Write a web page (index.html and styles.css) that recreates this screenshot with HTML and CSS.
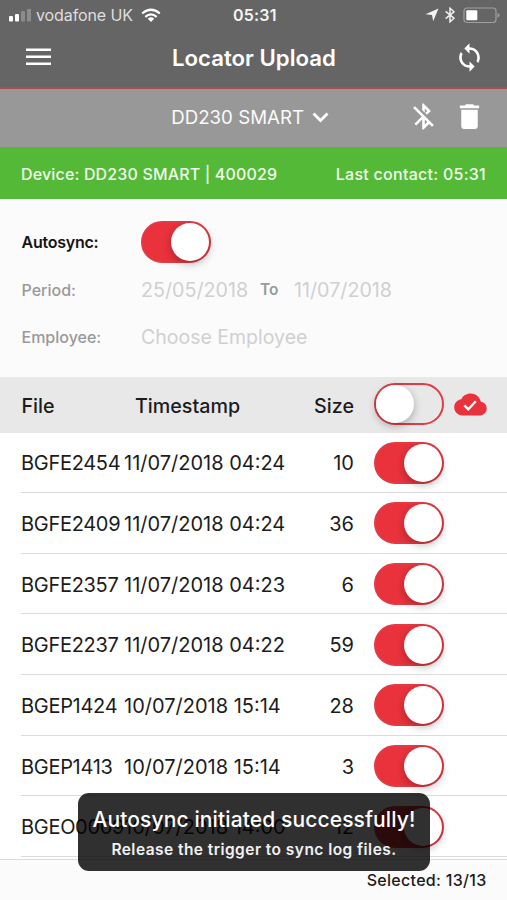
FILE: index.html
```html
<!DOCTYPE html>
<html lang="en">
<head>
<meta charset="utf-8">
<title>Locator Upload</title>
<link rel="stylesheet" href="styles.css">
</head>
<body>
<div class="screen">
  <div class="status">
    <div class="carrier">
      <svg width="24" height="14" viewBox="0 0 24 14"><g fill="#fff"><rect x="1" y="8" width="4" height="5.500" rx="1"/><rect x="7" y="6" width="4" height="7.500" rx="1"/><g opacity=".25"><rect x="13" y="3" width="4" height="10.500" rx="1"/><rect x="19" y="1" width="4" height="12.500" rx="1"/></g></g></svg>
      <span class="network">vodafone UK</span>
      <svg width="20" height="15" viewBox="0 0 20 15"><g fill="none" stroke="#fff" stroke-width="2.200"><path d="M1.200 5.500Q10-2 18.800 5.500"/><path d="M4.300 8.800Q10 4 15.700 8.800"/></g><path d="M6.800 10.700Q10 8 13.200 10.700L10 14Z" fill="#fff"/></svg>
    </div>
    <span class="clock">05:31</span>
    <div class="indicators">
      <svg width="14" height="14" viewBox="0 0 14 14"><path d="M13.500.5 8.200 13.200 7 7 .5 6.200Z" fill="#f4f4f4"/></svg>
      <svg width="10" height="16" viewBox="0 0 10 16"><path d="M.6 4.300 9 11.200 5 14.800V1.200L9 4.800.6 11.700" fill="none" stroke="#f0f0f0" stroke-width="1.500"/></svg>
      <svg width="37" height="17" viewBox="0 0 37 17"><rect x="1" y="1" width="32" height="14.500" rx="3" fill="none" stroke="#a0a0a0" stroke-width="1.200"/><path d="M34.500 6v4.500Q36.500 10 36.500 8.200T34.500 6Z" fill="#a0a0a0"/><rect x="3.300" y="3.300" width="11" height="10" rx="1" fill="#fff"/></svg>
    </div>
  </div>
  <header class="header">
    <svg class="menu" width="25" height="18" viewBox="0 0 25 18"><path d="M0 1.700h25M0 8.800h25M0 15.800h25" stroke="#fff" stroke-width="2.400"/></svg>
    <h1 class="title">Locator Upload</h1>
    <svg class="sync" width="31" height="31" viewBox="0 0 24 24"><path fill="#fff" d="M12 4V1L8 5l4 4V6c3.310 0 6 2.690 6 6 0 1.010-.25 1.970-.7 2.800l1.460 1.460C19.540 15.030 20 13.570 20 12c0-4.420-3.580-8-8-8zm0 14c-3.310 0-6-2.690-6-6 0-1.010.25-1.970.7-2.800L5.240 7.740C4.460 8.970 4 10.430 4 12c0 4.420 3.580 8 8 8v3l4-4-4-4v3z"/></svg>
  </header>
  <div class="device-bar">
    <div class="device-select"><span class="device-name">DD230 SMART</span>
      <svg width="17" height="11" viewBox="0 0 17 11"><path d="M1.500 1.500 8.500 8.500 15.500 1.500" fill="none" stroke="#fff" stroke-width="2.800"/></svg></div>
    <svg class="bt-off" width="31" height="31" viewBox="0 0 24 24"><path fill="#fff" d="M13 5.830l1.880 1.880-1.600 1.600 1.410 1.410 3.020-3.020L12 2h-1v5.030l2 2v-3.200zM5.410 4L4 5.410 10.590 12 5 17.590 6.410 19 11 14.410V22h1l4.290-4.290 2.300 2.290L20 18.590 5.410 4zM13 18.170v-3.760l1.880 1.880L13 18.170z"/></svg>
    <svg class="trash" width="33" height="33" viewBox="0 0 24 24"><path fill="#fff" d="M6 19c0 1.100.9 2 2 2h8c1.100 0 2-.9 2-2V7H6v12zM19 4h-3.500l-1-1h-5l-1 1H5v2h14V4z"/></svg>
  </div>
  <div class="contact-bar"><span class="device-info">Device: DD230 SMART | 400029</span><span class="contact">Last contact: 05:31</span></div>
  <section class="form">
    <div class="field"><label class="label active">Autosync:</label><span class="switch on"><i class="knob"></i></span></div>
    <div class="field period"><label class="label">Period:</label><span class="value date-from">25/05/2018</span><span class="to">To</span><span class="value date-to">11/07/2018</span></div>
    <div class="field"><label class="label employee">Employee:</label><span class="value choose">Choose Employee</span></div>
  </section>
  <div class="table-head">
    <span class="col-file">File</span><span class="col-stamp">Timestamp</span><span class="col-size">Size</span><span class="switch"><i class="knob"></i></span>
    <svg class="cloud" width="33" height="23" viewBox="0 0 33 23"><path fill="#e9323c" d="M26.800 8.800C25.800 3.800 21.500.5 16.500.5c-4 0-7.500 2.200-9.200 5.700C3.200 6.800.2 10.200.2 14.200c0 4.500 3.600 8.200 8.200 8.200h17.500c3.800 0 6.800-3.100 6.800-6.900 0-3.500-2.600-6.400-5.900-6.700Z"/><path d="m10.300 12.300 4 4 7.500-8" fill="none" stroke="#fff" stroke-width="2.400"/></svg>
  </div>
  <div class="rows">
    <div class="row"><span class="file">BGFE2454</span><span class="stamp">11/07/2018 04:24</span><span class="size">10</span><span class="switch on"><i class="knob"></i></span></div>
    <div class="row"><span class="file">BGFE2409</span><span class="stamp">11/07/2018 04:24</span><span class="size">36</span><span class="switch on"><i class="knob"></i></span></div>
    <div class="row"><span class="file">BGFE2357</span><span class="stamp">11/07/2018 04:23</span><span class="size">6</span><span class="switch on"><i class="knob"></i></span></div>
    <div class="row"><span class="file">BGFE2237</span><span class="stamp">11/07/2018 04:22</span><span class="size">59</span><span class="switch on"><i class="knob"></i></span></div>
    <div class="row"><span class="file">BGEP1424</span><span class="stamp">10/07/2018 15:14</span><span class="size">28</span><span class="switch on"><i class="knob"></i></span></div>
    <div class="row"><span class="file">BGEP1413</span><span class="stamp">10/07/2018 15:14</span><span class="size">3</span><span class="switch on"><i class="knob"></i></span></div>
    <div class="row"><span class="file">BGEO0009</span><span class="stamp">10/07/2018 14:00</span><span class="size">12</span><span class="switch on"><i class="knob"></i></span></div>
  </div>
  <footer class="footer"><span class="selected">Selected: 13/13</span></footer>
  <div class="toast"><div class="toast-title">Autosync initiated successfully!</div><div class="toast-text">Release the trigger to sync log files.</div></div>
</div>
</body>
</html>
```
FILE: styles.css
```css
* { box-sizing: border-box; }
body { margin: 0; font-family: Inter, "Liberation Sans", sans-serif; color: #1c1c1c; }
svg { display: block; flex: none; }
span, label, .toast-title, .toast-text { white-space: nowrap; }
.screen { position: relative; width: 507px; height: 900px; overflow: hidden; display: flex; flex-direction: column; background: #fff; }
.screen > * { flex: none; }

.status { height: 30px; background: #656565; display: grid; grid-template-columns: 1fr auto 1fr; align-items: center; padding: 0 7px 0 8px; color: #f4f4f4; font-size: 16px; }
.carrier { display: flex; align-items: center; }
.network { width: 96px; margin: 0 9px 0 4px; color: #dedede; letter-spacing: -.1px; }
.clock { font-weight: 600; width: 44px; letter-spacing: .2px; padding-left: 1px; }
.indicators { display: flex; align-items: center; justify-content: flex-end; gap: 6px; }
.indicators svg:nth-child(2) { margin-right: 2px; }

.header { height: 58.500px; background: #656565; border-bottom: 2.500px solid #ac4c4e; display: flex; align-items: center; padding: 0 22px 2px 26px; }
.menu { margin-right: 121px; }
.title { margin: 0; font-size: 22.200px; font-weight: 600; color: #fff; white-space: nowrap; }
.sync { margin-left: auto; }

.device-bar { height: 58.500px; background: #989898; display: flex; align-items: center; justify-content: flex-end; padding: 0 21px 2px 0; color: #fafafa; }
.device-select { display: flex; align-items: center; gap: 8px; margin-right: 79px; padding-top: 2px; font-size: 18.700px; }
.bt-off { margin-right: 14px; }

.contact-bar { height: 52px; background: #54b937; color: #f0fbeb; display: flex; justify-content: space-between; align-items: center; padding: 1px 21px 0; font-size: 16px; font-weight: 500; }
.device-info { letter-spacing: .16px; }
.contact { letter-spacing: .27px; }

.form { height: 178px; background: #fbfbfb; padding-top: 19.500px; }
.field { height: 47.300px; padding-left: 21px; display: flex; align-items: center; }
.period { padding-top: 1px; }
.field .switch { margin-top: -1px; }
.label { width: 120px; padding-left: .5px; font-size: 16px; font-weight: 500; color: #999; }
.label.active { color: #151515; font-weight: 600; letter-spacing: -.25px; }
.value { color: #d0d0d0; font-size: 19.700px; }
.date-from { width: 107px; }
.to { width: 46px; padding-left: 12px; font-size: 15.500px; font-weight: 600; color: #999; }
.value.choose { font-size: 19.500px; }

.switch { flex: none; width: 70px; height: 42px; border: 2px solid #e33a44; border-radius: 21px; display: flex; }
.on { background: #e9323c; justify-content: flex-end; }
.knob { width: 38px; height: 38px; border-radius: 50%; background: #fff; box-shadow: 0 3px 8px rgba(0,0,0,.28); }

.table-head { height: 55.500px; background: #e8e8e8; display: grid; grid-template-columns: 114px 120px 99px 90px 43px; align-items: center; padding-left: 21px; font-size: 19.700px; font-weight: 500; }
.table-head span:not(.switch) { padding-top: 2px; }
.table-head .switch, .row .switch { margin-left: 20px; }
.table-head .switch { margin-top: -1px; }
.table-head .col-file { padding-left: .5px; }
.col-size, .size { text-align: right; }
.cloud { margin-left: 10px; }

.row { margin-left: 21px; height: 60.650px; padding-top: 1px; border-bottom: 1px solid #dcdcdc; display: grid; grid-template-columns: 103px 161px 69px 90px; align-items: center; font-size: 20px; }
.row span:not(.switch) { padding-top: 1px; }
.file { letter-spacing: -.3px; }

.footer { height: 41px; margin-top: auto; border-top: 1px solid #dcdcdc; background: #fbfbfb; padding: 0 20.500px; display: flex; align-items: center; justify-content: flex-end; font-size: 16px; font-weight: 500; }
.selected { letter-spacing: .3px; }

.toast { position: absolute; left: 78px; top: 793px; width: 352px; height: 78px; border-radius: 11px; background: rgba(0,0,0,.81); color: #fff; display: flex; flex-direction: column; align-items: center; padding-top: 12px; }
.toast-title { font-size: 21px; line-height: 30px; font-weight: 500; letter-spacing: .12px; }
.toast-text { font-size: 15.500px; line-height: 29px; font-weight: 600; letter-spacing: .45px; color: #f1f1f1; }
```
